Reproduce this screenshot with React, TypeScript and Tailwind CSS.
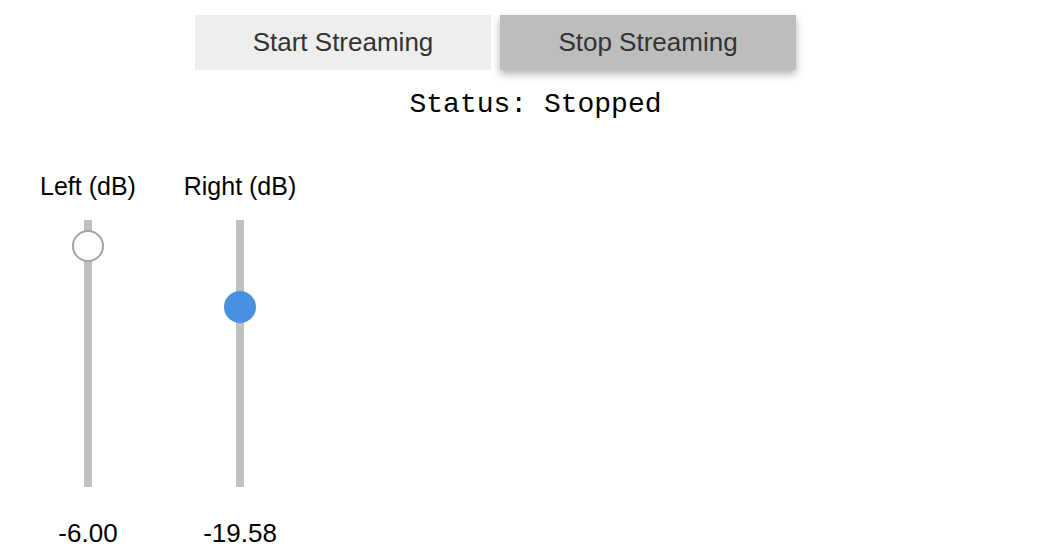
import React from "react";

interface Channel {
  label: string;
  value: number;
  thumbTop: number;
  active: boolean;
}

const channels: Channel[] = [
  { label: "Left (dB)", value: -6, thumbTop: 10, active: false },
  { label: "Right (dB)", value: -19.58, thumbTop: 71, active: true },
];

const Meter: React.FC<{ channel: Channel }> = ({ channel }) => (
  <div className="flex w-[152px] flex-col items-center">
    <div className="h-[28px] text-[25px] leading-[28px] text-black">{channel.label}</div>
    <div className="relative mt-[20px] h-[267px] w-[8px] bg-[#c0c0c0]">
      <div
        className={
          channel.active
            ? "absolute left-[-12px] h-[32px] w-[32px] rounded-full bg-[#4a90e2]"
            : "absolute left-[-12px] h-[32px] w-[32px] rounded-full border-2 border-[#a3a3a3] bg-white"
        }
        style={{ top: channel.thumbTop }}
      />
    </div>
    <div className="mt-[31px] h-[30px] text-[26px] leading-[30px] text-black">
      {channel.value.toFixed(2)}
    </div>
  </div>
);

export default function App() {
  return (
    <div
      className="flex h-[560px] w-[1064px] flex-col bg-white"
      style={{ fontFamily: '"Liberation Sans", Arial, sans-serif' }}
    >
      <div className="flex gap-[9px] pt-[15px] pl-[195px]">
        <button className="h-[55px] w-[296px] bg-[#eeeeee] text-[26px] text-[#333333]">
          Start Streaming
        </button>
        <button className="h-[55px] w-[296px] bg-[#bdbdbd] text-[26px] text-[#333333] shadow-[0_4px_8px_rgba(0,0,0,0.3)]">
          Stop Streaming
        </button>
      </div>
      <div className="mt-[19px] h-[32px] pl-[7px] text-center font-['Liberation_Mono',monospace] text-[28px] leading-[32px] text-black">
        Status: Stopped
      </div>
      <div className="mt-[51px] flex pl-[12px]">
        {channels.map((c) => (
          <Meter key={c.label} channel={c} />
        ))}
      </div>
    </div>
  );
}
